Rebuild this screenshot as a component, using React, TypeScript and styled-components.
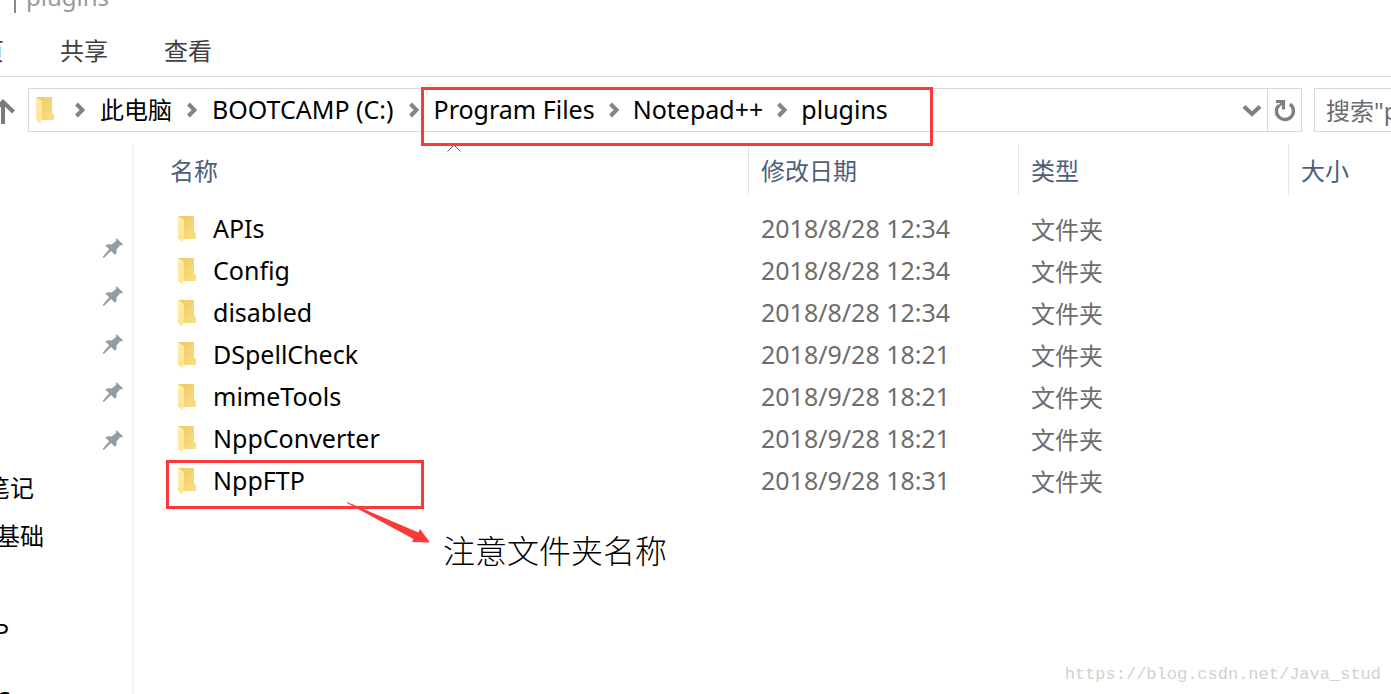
import React from "react";
import styled, { createGlobalStyle } from "styled-components";

const LATIN = '"Noto Sans", "Noto Sans CJK SC", sans-serif';
const RED = "#fa3939";

const GlobalStyle = createGlobalStyle`
  *, *::before, *::after { box-sizing: border-box; }
  body { margin: 0; background: #fff; color: #000; font: 25px/32px ${LATIN}; }
  button, input { font: inherit; color: inherit; border: 0; padding: 0; margin: 0; background: none; }
  svg { display: block; flex: none; }
`;

const Window = styled.div`
  position: relative;
  display: flex;
  flex-direction: column;
  height: 100vh;
  overflow: hidden;
`;

const TitleBar = styled.header`
  display: flex;
  align-items: flex-end;
  gap: 10px;
  height: 16px;
  padding: 0 0 3px 14px;
  font-size: 24px;
  color: #999;
`;

const TitleDivider = styled.span`
  width: 2px;
  height: 13px;
  background: #8a8a8a;
`;

const Ribbon = styled.nav`
  display: flex;
  align-items: center;
  gap: 56px;
  height: 61px;
  padding-top: 9px;
  border-bottom: 1px solid #dadbdc;
`;

const RibbonTab = styled.button<{ $clipped?: boolean }>`
  display: flex;
  justify-content: flex-end;
  width: ${(p) => (p.$clipped ? "4px" : "auto")};
  overflow: hidden;
  white-space: nowrap;
  font-size: 24px;
  color: #404040;
`;

const AddressRow = styled.div`
  display: flex;
  height: 55px;
  padding-top: 11px;
`;

const UpButton = styled.button`
  display: flex;
  justify-content: flex-end;
  align-items: center;
  width: 28px;
  padding: 4px 13px 0 0;
  overflow: hidden;
`;

const AddressBar = styled.div`
  display: flex;
  align-items: center;
  flex: 1;
  min-width: 0;
  border: 1px solid #d9d9d9;
  padding-left: 6px;
`;

const Crumbs = styled.div`
  display: flex;
  align-items: center;
  flex: 1;
  gap: 15px;
  padding-left: 20px;
`;

const CrumbGroup = styled.div`
  position: relative;
  display: flex;
  align-items: center;
  gap: 14px;
`;

const Crumb = styled.button<{ $cjk?: boolean }>`
  padding-bottom: ${(p) => (p.$cjk ? "0" : "2px")};
  white-space: nowrap;
  font-size: ${(p) => (p.$cjk ? "24px" : "25px")};
`;

const PathMark = styled.div`
  position: absolute;
  z-index: 1;
  top: -6px;
  left: -13px;
  width: 512px;
  height: 59px;
  border: 3px solid ${RED};
  pointer-events: none;
`;

const BarButton = styled.button<{ $divided?: boolean }>`
  display: flex;
  align-items: center;
  justify-content: center;
  align-self: stretch;
  width: ${(p) => (p.$divided ? "34px" : "30px")};
  padding-top: 2px;
  border-left: ${(p) => (p.$divided ? "1px solid #d9d9d9" : "0")};
`;

const SearchBox = styled.label`
  display: flex;
  width: 77px;
  margin-left: 12px;
  padding-left: 11px;
  border: 1px solid #d9d9d9;
  border-right: 0;
`;

const SearchInput = styled.input`
  width: 100%;
  min-width: 0;
  padding-top: 2px;
  font-size: 24px;
  outline: none;
  &::placeholder { color: #6d6d6d; opacity: 1; }
`;

const Body = styled.div`
  display: flex;
  flex: 1;
  min-height: 0;
  padding-top: 12px;
`;

const Sidebar = styled.aside`
  flex: none;
  width: 134px;
  padding: 80px 9px 0 0;
  border-right: 2px solid #f5f5f5;
  overflow: hidden;
`;

const SideRow = styled.div<{ $spaced?: boolean }>`
  display: flex;
  align-items: center;
  justify-content: space-between;
  height: 48px;
  margin-top: ${(p) => (p.$spaced ? "20px" : "0")};
`;

const SideLabel = styled.a<{ $visible: number }>`
  display: flex;
  justify-content: flex-end;
  width: ${(p) => p.$visible}px;
  overflow: hidden;
  white-space: nowrap;
  color: #000;
  text-decoration: none;
  font-size: 24px;
`;

const Content = styled.main`
  position: relative;
  flex: 1;
  min-width: 0;
`;

const FileTable = styled.table`
  width: 100%;
  table-layout: fixed;
  border-collapse: separate;
  border-spacing: 0;
`;

const HeadCell = styled.th<{ $width?: number; $first?: boolean }>`
  position: relative;
  width: ${(p) => (p.$width ? `${p.$width}px` : "auto")};
  height: 51px;
  padding: 2px 0 0 ${(p) => (p.$first ? "36px" : "12px")};
  border-left: ${(p) => (p.$first ? "0" : "1px solid #e5e5e5")};
  text-align: left;
  font-size: 24px;
  font-weight: 400;
  color: #4c607a;
`;

const SortMark = styled.svg`
  position: absolute;
  top: 0;
  left: 313px;
`;

const Spacer = styled.tr`
  height: 13px;
`;

const Cell = styled.td<{ $cjk?: boolean }>`
  height: 42px;
  padding: ${(p) => (p.$cjk ? "2px 0 0 13px" : "0 0 2px 13px")};
  color: #6d6d6d;
  white-space: nowrap;
  font-size: ${(p) => (p.$cjk ? "24px" : "25px")};
`;

const NameCell = styled(Cell)`
  position: relative;
  padding: 0 0 0 43px;
  color: #000;
`;

const FileName = styled.span`
  display: flex;
  align-items: center;
  gap: 16px;
`;

const FileLabel = styled.span`
  padding-bottom: 2px;
`;

const RowMark = styled.div`
  position: absolute;
  top: 0;
  left: 32px;
  width: 258px;
  height: 49px;
  border: 3px solid ${RED};
`;

const Note = styled.div`
  position: absolute;
  top: 42px;
  left: 212px;
  display: flex;
  gap: 13px;
  font-size: 32px;
  font-weight: 300;
  line-height: 44px;
  font-family: "Liberation Serif", "Noto Sans CJK SC", serif;
`;

const NoteText = styled.span`
  padding-top: 28px;
`;

const Watermark = styled.div`
  position: absolute;
  right: 10px;
  bottom: 7px;
  font: 17px/24px "Liberation Mono", monospace;
  color: #d2d2cc;
`;

const FolderIcon = () => (
  <svg width="20" height="28" viewBox="0 0 20 28" aria-hidden="true">
    <defs>
      <linearGradient id="folderBack" x1="0" y1="0" x2="1" y2="1">
        <stop offset="0" stopColor="#edc95f" />
        <stop offset="1" stopColor="#fbdf85" />
      </linearGradient>
      <linearGradient id="folderFlap" x1="0" y1="0" x2="0" y2="1">
        <stop offset="0" stopColor="#ffecaa" />
        <stop offset="1" stopColor="#fde394" />
      </linearGradient>
    </defs>
    <path d="M1 1H17V16.500L19 18.500V24H5V6Z" fill="url(#folderBack)" />
    <path d="M1 1L7 5V23L5.800 24V27.800L1 23.800Z" fill="url(#folderFlap)" />
  </svg>
);

const CrumbArrow = () => (
  <svg width="10" height="16" viewBox="0 0 10 16" aria-hidden="true">
    <path d="M1.500 2L7.500 8L1.500 14" fill="none" stroke="#838383" strokeWidth="4" />
  </svg>
);

const UpArrow = () => (
  <svg width="24" height="26" viewBox="0 0 24 26" aria-hidden="true">
    <path d="M12 25V3M1.500 13L12 2.800L22.500 13" fill="none" stroke="#7a7a7a" strokeWidth="4" />
  </svg>
);

const DropArrow = () => (
  <svg width="20" height="14" viewBox="0 0 20 14" aria-hidden="true">
    <path d="M2 2.500L10 10L18 2.500" fill="none" stroke="#7f7f7f" strokeWidth="4" />
  </svg>
);

const RefreshIcon = () => (
  <svg width="22" height="24" viewBox="0 0 22 24" aria-hidden="true">
    <path d="M16 5.200A8.500 8.500 0 1 1 4.600 6.400" fill="none" stroke="#7f7f7f" strokeWidth="3.400" />
    <path d="M2 2.500H9.500V10.500" fill="none" stroke="#7f7f7f" strokeWidth="3.200" />
    <path d="M4 8L9 3" fill="none" stroke="#7f7f7f" strokeWidth="2.400" />
  </svg>
);

const PinIcon = () => (
  <svg width="20" height="20" viewBox="0 0 20 20" aria-hidden="true">
    <path
      d="M13.500 0.200L20 6.200L18.500 7.500L17 7.200L13.600 11.200Q14.300 14.300 12.200 17L8 13L1.200 19.800H0V18.600L6.200 11.200L2.300 7.600Q5 5.700 8.700 6.600L13 3L12.600 1.400Z"
      fill="#929ca3"
    />
  </svg>
);

const NoteArrow = () => (
  <svg width="84" height="42" viewBox="0 0 84 42" aria-hidden="true">
    <path d="M1 0L72.500 30.500L74 27L84 40.500L66 40L67.500 37L1 1Z" fill={RED} />
  </svg>
);

const files = [
  { name: "APIs", date: "2018/8/28 12:34" },
  { name: "Config", date: "2018/8/28 12:34" },
  { name: "disabled", date: "2018/8/28 12:34" },
  { name: "DSpellCheck", date: "2018/9/28 18:21" },
  { name: "mimeTools", date: "2018/9/28 18:21" },
  { name: "NppConverter", date: "2018/9/28 18:21" },
  { name: "NppFTP", date: "2018/9/28 18:31", marked: true },
];

const places = [
  { label: "", visible: 0, pinned: true },
  { label: "", visible: 0, pinned: true },
  { label: "", visible: 0, pinned: true },
  { label: "", visible: 0, pinned: true },
  { label: "", visible: 0, pinned: true },
  { label: "笔记", visible: 34 },
  { label: "基础", visible: 44 },
  { label: "", visible: 0 },
  { label: "P", visible: 9 },
  { label: "S", visible: 11, spaced: true },
];

export default function App() {
  return (
    <Window>
      <GlobalStyle />
      <TitleBar>
        <TitleDivider />
        <span>plugins</span>
      </TitleBar>
      <Ribbon>
        <RibbonTab $clipped>页</RibbonTab>
        <RibbonTab>共享</RibbonTab>
        <RibbonTab>查看</RibbonTab>
      </Ribbon>
      <AddressRow>
        <UpButton aria-label="上移">
          <UpArrow />
        </UpButton>
        <AddressBar>
          <FolderIcon />
          <Crumbs>
            <CrumbArrow />
            <Crumb $cjk>此电脑</Crumb>
            <CrumbArrow />
            <Crumb>BOOTCAMP (C:)</Crumb>
            <CrumbArrow />
            <CrumbGroup>
              <Crumb>Program Files</Crumb>
              <CrumbArrow />
              <Crumb>Notepad++</Crumb>
              <CrumbArrow />
              <Crumb>plugins</Crumb>
              <PathMark />
            </CrumbGroup>
          </Crumbs>
          <BarButton aria-label="历史记录">
            <DropArrow />
          </BarButton>
          <BarButton $divided aria-label="刷新">
            <RefreshIcon />
          </BarButton>
        </AddressBar>
        <SearchBox>
          <SearchInput aria-label="搜索" placeholder={'搜索"plugins"'} />
        </SearchBox>
      </AddressRow>
      <Body>
        <Sidebar>
          {places.map((p, i) => (
            <SideRow key={i} $spaced={p.spaced}>
              {p.label ? (
                <SideLabel href="#" $visible={p.visible}>
                  {p.label}
                </SideLabel>
              ) : (
                <span />
              )}
              {p.pinned && <PinIcon />}
            </SideRow>
          ))}
        </Sidebar>
        <Content>
          <FileTable>
            <thead>
              <tr>
                <HeadCell $first $width={614}>
                  名称
                  <SortMark width="14" height="8" viewBox="0 0 14 8" aria-hidden="true">
                    <path d="M0.500 7.500L7 1L13.500 7.500" fill="none" stroke="#555" />
                  </SortMark>
                </HeadCell>
                <HeadCell $width={270}>修改日期</HeadCell>
                <HeadCell $width={270}>类型</HeadCell>
                <HeadCell>大小</HeadCell>
              </tr>
            </thead>
            <tbody>
              <Spacer />
              {files.map((f) => (
                <tr key={f.name}>
                  <NameCell>
                    <FileName>
                      <FolderIcon />
                      <FileLabel>{f.name}</FileLabel>
                    </FileName>
                    {f.marked && (
                      <>
                        <RowMark />
                        <Note>
                          <NoteArrow />
                          <NoteText>注意文件夹名称</NoteText>
                        </Note>
                      </>
                    )}
                  </NameCell>
                  <Cell>{f.date}</Cell>
                  <Cell $cjk>文件夹</Cell>
                  <Cell />
                </tr>
              ))}
            </tbody>
          </FileTable>
        </Content>
      </Body>
      <Watermark>https://blog.csdn.net/Java_stud</Watermark>
    </Window>
  );
}
